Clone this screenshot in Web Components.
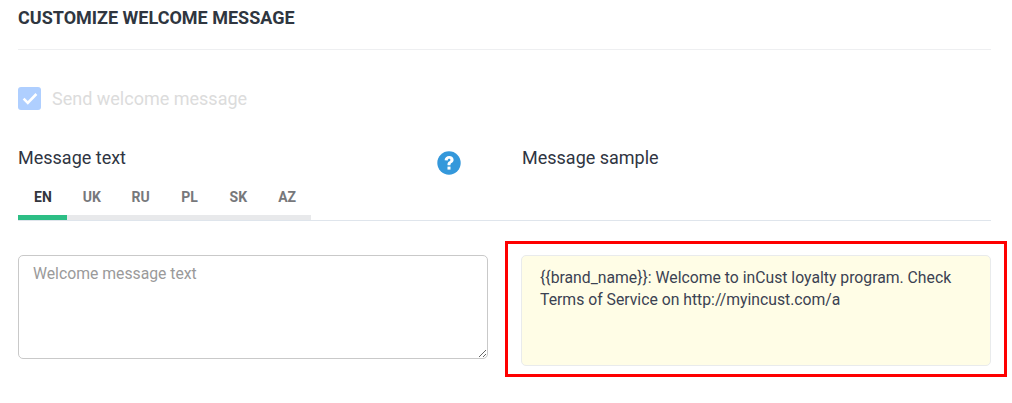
<!DOCTYPE html>
<html>
<head>
<meta charset="utf-8">
<title>Customize welcome message</title>
<style>
  html, body { margin: 0; background: #fff; }
  body { font-family: Roboto, "Liberation Sans", sans-serif; color: #2f3542; overflow: hidden; }
</style>
</head>
<body>
<welcome-settings>
  <section-title slot="title">CUSTOMIZE WELCOME MESSAGE</section-title>
  <check-field slot="check">Send welcome message</check-field>
  <lang-tabs slot="tabs"></lang-tabs>
  <sample-box slot="sample">{{brand_name}}: Welcome to inCust loyalty program. Check Terms of Service on http://myincust.com/a</sample-box>
</welcome-settings>

<script>
class SectionTitle extends HTMLElement {
  constructor() {
    super();
    this.attachShadow({ mode: "open" });
    this.shadowRoot.innerHTML = `
      <style>
        :host {
          display: block;
          height: 49px;
          border-bottom: 1px solid #eeeff1;
          box-sizing: content-box;
        }
        h2 {
          margin: 0;
          padding-top: 8px;
          font-size: 18px;
          line-height: 20px;
          font-weight: 700;
          color: #2f3640;
        }
      </style>
      <h2><slot></slot></h2>
    `;
  }
}
customElements.define("section-title", SectionTitle);

class CheckField extends HTMLElement {
  constructor() {
    super();
    this.attachShadow({ mode: "open" });
    this.shadowRoot.innerHTML = `
      <style>
        :host {
          display: flex;
          align-items: center;
          gap: 11px;
          height: 23px;
          color: #dcdcdc;
          font-size: 18px;
        }
        .box {
          width: 23px;
          height: 23px;
          border-radius: 3px;
          background: #afcfff;
          display: flex;
          align-items: center;
          justify-content: center;
        }
      </style>
      <span class="box">
        <svg width="16" height="13" viewBox="0 0 16 13">
          <path d="M1.6 6.6l4.2 4.2L14.4 2" fill="none" stroke="#fff" stroke-width="2.6"/>
        </svg>
      </span>
      <span><slot></slot></span>
    `;
  }
}
customElements.define("check-field", CheckField);

class LangTabs extends HTMLElement {
  constructor() {
    super();
    this.attachShadow({ mode: "open" });
    const langs = ["EN", "UK", "RU", "PL", "SK", "AZ"];
    const tabs = langs
      .map((l, i) => `<div class="tab ${i === 0 ? "active" : ""}">${l}</div>`)
      .join("");
    this.shadowRoot.innerHTML = `
      <style>
        :host {
          display: block;
          border-bottom: 1px solid #dfe5ec;
        }
        .row { display: flex; }
        .tab {
          width: 48.85px;
          height: 39px;
          box-sizing: border-box;
          padding: 7px 0 0 1px;
          text-align: center;
          font-size: 14px;
          line-height: 18px;
          font-weight: 700;
          color: #77787b;
          border-bottom: 5px solid #e8e9eb;
        }
        .active { color: #33363d; border-bottom-color: #2dbe85; }
      </style>
      <div class="row">${tabs}</div>
    `;
  }
}
customElements.define("lang-tabs", LangTabs);

class SampleBox extends HTMLElement {
  constructor() {
    super();
    this.attachShadow({ mode: "open" });
    this.shadowRoot.innerHTML = `
      <style>
        :host {
          display: block;
          height: 111px;
          box-sizing: border-box;
          padding: 11px 18px;
          background: #fffde6;
          border: 1px solid #e9ebec;
          border-radius: 5px;
          font-size: 15.75px;
          line-height: 22px;
          color: #3b4252;
        }
      </style>
      <slot></slot>
    `;
  }
}
customElements.define("sample-box", SampleBox);

class WelcomeSettings extends HTMLElement {
  constructor() {
    super();
    this.attachShadow({ mode: "open" });
    this.shadowRoot.innerHTML = `
      <style>
        :host {
          display: block;
          position: relative;
          box-sizing: border-box;
          width: 1012px;
          height: 403px;
          padding: 0 21px 0 18px;
        }
        .check { padding-top: 37px; }
        .heads {
          display: grid;
          grid-template-columns: 470px 470px;
          column-gap: 33px;
          margin-top: 26px;
          height: 47px;
          box-sizing: border-box;
        }
        .lbl { font-size: 18px; line-height: 44px; color: #2f3542; }
        .sample-lbl { padding-left: 1px; }
        .left-head { display: flex; justify-content: space-between; padding-right: 27px; }
        .help { margin-top: 15px; }
        .tabs { margin-top: -2px; }
        .fields {
          display: grid;
          grid-template-columns: 470px 470px;
          column-gap: 33px;
          margin-top: 34px;
        }
        textarea {
          display: block;
          width: 470px;
          height: 104px;
          box-sizing: border-box;
          margin: 0;
          padding: 8px 14px;
          border: 1px solid #c9c9c9;
          border-radius: 5px;
          outline: none;
          background: #fff;
          font: 15.75px/20px Roboto, "Liberation Sans", sans-serif;
        }
        textarea::placeholder { color: #9a9a9a; opacity: 1; }
        .mark {
          position: absolute;
          left: 505px;
          top: 241px;
          width: 502px;
          height: 136px;
          box-sizing: border-box;
          border: 3px solid #fe0000;
          pointer-events: none;
        }
      </style>
      <slot name="title"></slot>
      <div class="check"><slot name="check"></slot></div>
      <div class="heads">
        <div class="left-head">
          <span class="lbl">Message text</span>
          <svg class="help" width="24" height="24" viewBox="0 0 24 24">
            <circle cx="12" cy="12" r="11.7" fill="#3498db"/>
            <path d="M7.6 9.3C7.7 6.6 9.6 5 12.2 5c2.6 0 4.4 1.5 4.4 3.7 0 1.7-1 2.6-2 3.3-.8.5-1.1.9-1.1 1.8v.4h-3v-.6c0-1.6.5-2.3 1.6-3.1.9-.6 1.3-1 1.3-1.6 0-.7-.5-1.1-1.2-1.1-.9 0-1.4.6-1.5 1.6z" fill="#fff"/>
            <rect x="10.5" y="15.6" width="3" height="3" fill="#fff"/>
          </svg>
        </div>
        <span class="lbl sample-lbl">Message sample</span>
      </div>
      <div class="tabs"><slot name="tabs"></slot></div>
      <div class="fields">
        <textarea placeholder="Welcome message text"></textarea>
        <div><slot name="sample"></slot></div>
      </div>
      <div class="mark"></div>
    `;
  }
}
customElements.define("welcome-settings", WelcomeSettings);
</script>
</body>
</html>
